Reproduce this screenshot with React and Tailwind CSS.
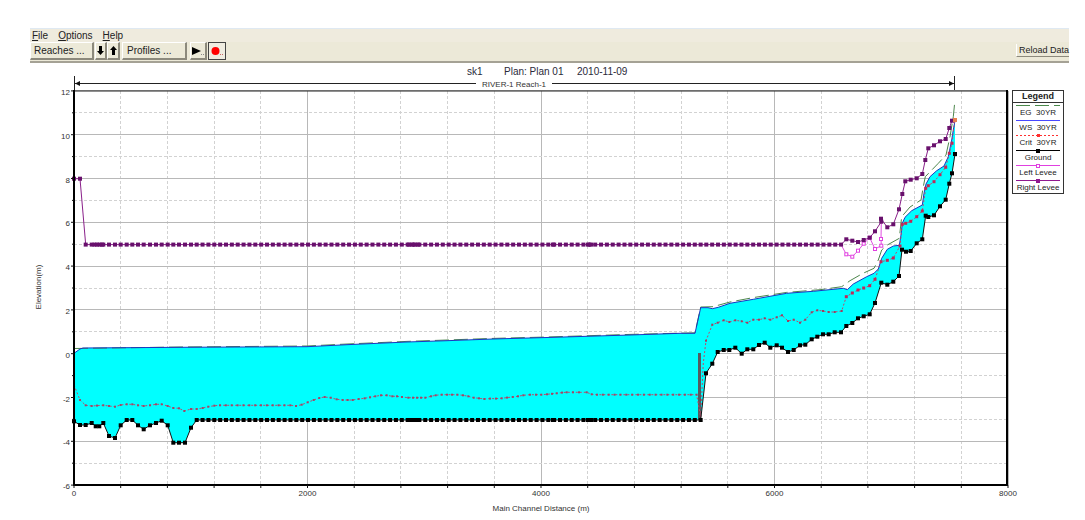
// Evenly spaced cross sections between the upstream bend and the weir
const evenStations = Array.from({ length: 87 }, (_, i) => 196.7 + i * 5.86);
const extraStations = [409, 412, 415, 418, 553, 588, 591];
const flatStations = [...evenStations, ...extraStations].sort((a, b) => a - b);

const ground = [
  [74, 421.3], [80, 425], [85.7, 425], [91.7, 423], [95.7, 426.3], [99.3, 426.3], [103.3, 423],
  [109, 436], [115, 438], [120.7, 425.3], [126.7, 420], [132.3, 420], [138, 425.3], [143.7, 429.3],
  [150, 425.3], [156, 423], [161.7, 420.7], [167.7, 425.3], [173.3, 442.7], [179, 442.7],
  [185, 442.7], [191, 427.7],
  ...flatStations.map((x) => [x, 420]),
  [706, 373.3], [712.3, 363.7], [717.7, 352], [723.7, 350], [729.3, 350], [735.3, 347.7],
  [741.7, 353.7], [747.3, 349.3], [753.3, 349.3], [759, 345], [764.7, 342.7], [770.3, 347.7],
  [776.7, 345.3], [782, 347.7], [788, 352], [793.7, 350], [800, 345.3], [805.3, 344.7],
  [811.7, 339.3], [817.3, 336.7], [823, 334.3], [828.7, 334.3], [834.7, 332.3], [841, 332.3],
  [846.3, 326], [852.3, 323], [858, 318.3], [863.7, 316.3], [869.7, 314.3], [875, 303],
  [881.3, 282.7], [887.3, 284.7], [893.3, 281.7], [899, 276], [902, 249.7], [906, 251.7],
  [910.7, 251], [916.7, 243.3], [922.3, 239.3], [925.7, 215.7], [928.3, 217], [934, 215.3],
  [940, 206.3], [945.7, 199.7], [949.3, 183.7], [952, 173.3], [955, 154],
];

const waterSurface = [
  [74, 353.3], [80, 349], [83, 348], [180, 347.3], [307, 346.7], [347, 344.7], [407, 342],
  [447, 340.7], [493, 339], [547, 337.5], [630, 335], [680, 333.3], [695, 333.3], [700.7, 307.7],
  [708, 307.7], [712.3, 308.7], [718.3, 307.3], [730, 303.3], [753.3, 299.3], [786.7, 293.3],
  [813.3, 291.3], [843.3, 288.3], [847.3, 289.7], [853.3, 284], [866.7, 276.7], [874, 273.3],
  [878.3, 269], [881.7, 258.3], [887.3, 249.3], [893.3, 246], [899.3, 245.3], [901, 235],
  [902.3, 223.3], [905, 217.3], [911.7, 210.7], [922.3, 205], [924, 193.3], [926, 184],
  [930, 176.7], [936.7, 170.7], [944, 166], [948.3, 156.7], [951.7, 140], [953.3, 130],
  [955, 120.7],
];

const energyGrade = [
  [74, 348.5], [180, 347], [307, 346], [347, 344], [407, 341.4], [447, 340], [493, 338.4],
  [547, 337], [630, 334.4], [695, 332.8], [700.7, 307], [713, 306.7], [730, 302], [753.3, 297.6],
  [786.7, 292.4], [820, 289.7], [841.7, 286.7], [850, 280.7], [863, 273.3], [874, 268.3],
  [878.3, 260], [881.7, 250], [887.3, 245], [899.3, 238.3], [901.7, 216.7], [910, 207],
  [921, 200], [923.3, 186.7], [925.3, 176.7], [938.3, 163.3], [946, 155], [950, 136.7],
  [953.3, 116.7], [954.7, 102.7],
];

const critical = [
  [74, 385], [80, 400], [85.7, 405.3], [91.7, 406], [97, 405.6], [103.3, 405.3], [109, 406],
  [115, 406.7], [120.7, 405], [126.7, 404.3], [132.3, 404.3], [138, 405.3], [143.7, 406],
  [150, 405.3], [156, 404.3], [161.7, 404.3], [167.7, 406], [173.3, 408], [179, 408.3],
  [184.3, 411], [191, 409], [196.7, 409], [202.7, 408], [208.3, 406.7], [214.3, 405.7],
  ...Array.from({ length: 13 }, (_, i) => [220 + i * 5.86, 405.3]),
  [296, 406], [301.7, 404.7], [307.7, 402.3], [313.7, 400], [319.3, 398], [324.7, 397],
  [330.7, 397.7], [336.7, 399.3], [342.7, 400], [347.7, 400], [352.7, 400], [358.7, 399],
  [364.7, 398.3], [370, 397.3], [375.3, 396.3], [381, 395.3], [386.7, 395.3], [392.3, 396.3],
  [397, 396.3], [402, 397], [408.3, 397.7], [413, 397.7], [417, 397.7], [421, 397.7],
  [425.3, 397.7], [431, 396.3], [435.7, 395.3], [441.7, 394.7], [447, 394.7], [452, 394.7],
  [457.3, 394.7], [463, 395.3], [468.3, 396.3], [473.7, 397.7], [479, 398.3], [484.3, 399],
  [490, 398.6], [496, 398.6], [501.7, 398.3], [507, 397.6], [512.7, 397], [518, 396.3],
  [523.3, 395.3], [530, 394.7], [536, 394.7], [541.3, 394.7], [547, 394.3], [552, 393.8],
  [556.7, 393.3], [562, 392.6], [566.7, 392.3], [573, 392.3], [579, 392.3], [586.7, 392.3],
  [591.7, 394.3],
  ...Array.from({ length: 18 }, (_, i) => [597 + i * 5.86, 394.7]),
  [700.7, 417], [703.3, 363], [706, 340.7], [712.3, 324.7], [717.7, 322.7], [723.7, 320.3],
  [729.3, 322], [735.3, 320.3], [741.7, 321.3], [747.3, 322.7], [753.3, 319.7], [759, 319.7],
  [764.7, 318.3], [770.3, 319.7], [776.7, 317.3], [782, 315.3], [788, 321], [793.7, 319.7],
  [800, 322.7], [805.3, 319.7], [811.7, 312.3], [817.3, 310.3], [823, 311], [828.7, 312],
  [834.7, 312], [841.7, 311], [846.3, 296.7], [852.3, 293], [858, 290], [863.7, 288],
  [869.7, 285.7], [875, 279.3], [881, 261.7], [887.3, 260.3], [893.3, 258], [900, 246],
  [902.3, 224.3], [905.7, 223.3], [910.7, 221.3], [916.7, 216.7], [922.3, 211], [925.7, 188.3],
  [928.3, 185.7], [934, 181.7], [940, 174.7], [945.7, 167.3], [949.3, 153.3], [952, 143.3],
  [954.7, 120],
];

const rightLevee = [
  [74, 178.7], [80, 178.7],
  ...[85.7, 91.7, 94.5, 97, 99.5, 102, 103.3, 109, 115, 120.7, 126.7, 132.3, 138, 143.7, 150, 156,
    161.7, 167.7, 173.3, 179, 185, 191].map((x) => [x, 244.6]),
  ...flatStations.map((x) => [x, 244.6]),
  ...Array.from({ length: 24 }, (_, i) => [706.3 + i * 5.86, 244.6]),
  [846.3, 239.3], [852.3, 240.7], [858, 242], [863.7, 240], [869.7, 237.7], [875, 231.3],
  [881.3, 221.7], [881, 218.7], [887.3, 227.3], [893.3, 224.3], [899, 209.3], [902.3, 194],
  [905.3, 181.3], [910.7, 179.7], [916.7, 178.3], [922.3, 174], [925.3, 160], [928.3, 148.3],
  [934, 145.3], [940, 141.3], [945.7, 139], [949.3, 128], [952, 120.7],
];

const leftLevee = [
  [841, 244.6], [846.3, 254.3], [852.3, 256.7], [858, 250.7], [863.7, 243.7], [869.7, 237.7],
  [875, 249], [881.3, 245.7], [881, 239], [881.3, 221.7],
];

const toPoints = (pts) => pts.map((p) => p.join(',')).join(' ');
const waterArea = [...waterSurface, ...[...ground].reverse()];

const xPos = (d) => 74 + d * 0.11675;
const yPos = (e) => 90.9 + (12 - e) * 21.9;

const stations = Array.from({ length: 21 }, (_, i) => i * 400);
const elevations = Array.from({ length: 19 }, (_, i) => i - 6);

const legendItems = [
  { label: 'EG  30YR', color: '#4c8a4c', dash: '14 5' },
  { label: 'WS  30YR', color: '#4848ff' },
  { label: 'Crit  30YR', color: '#ff3030', dash: '2 2', marker: 'dot' },
  { label: 'Ground', color: '#000000', marker: 'square' },
  { label: 'Left Levee', color: '#e040e0', marker: 'open' },
  { label: 'Right Levee', color: '#901890', marker: 'square' },
];

function Markers({ points, size, color }) {
  return points.map(([x, y], i) => (
    <rect key={i} x={x - size / 2} y={y - size / 2} width={size} height={size} fill={color} />
  ));
}

function ProfilePlot() {
  return (
    <svg
      viewBox="30 63 980 453"
      className="block h-auto min-w-0 flex-1 overflow-visible font-['Liberation_Sans',Arial,sans-serif] text-[8px]"
      role="img"
      aria-label="Water surface profile"
    >
      {/* Title and reach extent */}
      <g fill="#2a2a3a" fontSize="10">
        <text x="467" y="75">sk1</text>
        <text x="504" y="75">Plan: Plan 01</text>
        <text x="577" y="75">2010-11-09</text>
      </g>
      <g stroke="#222" fill="#111">
        <path d="M74.5 76V91M954.5 76V91M75 83.5H476M552 83.5H954" fill="none" />
        <path d="M75 83.5l5 -2.5v5zM954 83.5l-5 -2.5v5z" stroke="none" />
      </g>
      <text x="514" y="87" textAnchor="middle" fill="#333">RIVER-1 Reach-1</text>

      {/* Grid */}
      <g shapeRendering="crispEdges">
        {stations.map((d) => (
          <line
            key={d}
            x1={xPos(d)} x2={xPos(d)} y1="91" y2="485"
            stroke={d % 2000 === 0 ? '#b8b8b8' : '#d2d2d2'}
            strokeDasharray={d % 2000 === 0 ? undefined : '3 2'}
          />
        ))}
        {elevations.map((e) => (
          <line
            key={e}
            x1="74" x2="1007" y1={yPos(e)} y2={yPos(e)}
            stroke={e % 2 === 0 ? '#b8b8b8' : '#d2d2d2'}
            strokeDasharray={e % 2 === 0 ? undefined : '3 2'}
          />
        ))}
      </g>

      {/* Water body */}
      <polygon points={toPoints(waterArea)} fill="#00ffff" />
      <polyline points={toPoints(energyGrade)} fill="none" stroke="#4c864c" strokeDasharray="14 5" />
      <polyline points={toPoints(waterSurface)} fill="none" stroke="#1838c0" />

      {/* Weir */}
      <rect x="698" y="353" width="3" height="67" fill="#555a60" />

      <polyline points={toPoints(critical)} fill="none" stroke="#c04868" strokeDasharray="2 2" />
      <Markers points={critical.filter(([x]) => x < 698)} size={2} color="#a04868" />
      <Markers points={critical.filter(([x]) => x > 704 && x < 844)} size={2} color="#a03c60" />
      <Markers points={critical.filter(([x]) => x > 844)} size={3} color="#c02858" />

      <polyline points={toPoints(ground)} fill="none" stroke="#111" />
      <Markers points={ground} size={4} color="#000" />

      <polyline points={toPoints(leftLevee)} fill="none" stroke="#e050e0" />
      {leftLevee.slice(1, -1).map(([x, y], i) => (
        <rect key={i} x={x - 1.5} y={y - 1.5} width="3" height="3" fill="#fff" stroke="#e040e0" />
      ))}
      <polyline points={toPoints(rightLevee)} fill="none" stroke="#8a208a" />
      <Markers points={rightLevee} size={4} color="#68106c" />
      <rect x="953" y="118" width="4" height="4" fill="#e88050" />

      {/* Frame */}
      <path d="M74 91H1008" stroke="#222" fill="none" />
      <path d="M74 90V486M1007 90V486" stroke="#000" strokeWidth="2" fill="none" />
      <path d="M73 485H1008" stroke="#000" strokeWidth="2" fill="none" />

      {/* Ticks and labels */}
      {stations.map((d) => (
        <line key={d} x1={xPos(d)} x2={xPos(d)} y1="485" y2="488" stroke="#111" />
      ))}
      {elevations.map((e) => (
        <line key={e} x1={e % 2 === 0 ? 71 : 72} x2="74" y1={yPos(e)} y2={yPos(e)} stroke="#111" />
      ))}
      <g fill="#333">
        {stations.filter((d) => d % 2000 === 0).map((d) => (
          <text key={d} x={xPos(d)} y="496" textAnchor="middle">{d}</text>
        ))}
        {elevations.filter((e) => e % 2 === 0).map((e) => (
          <text key={e} x="70" y={yPos(e) + 4} textAnchor="end">{e}</text>
        ))}
        <text x="541" y="511" textAnchor="middle">Main Channel Distance (m)</text>
        <text transform="translate(41 287) rotate(-90)" textAnchor="middle">Elevation(m)</text>
      </g>
    </svg>
  );
}

function LegendLine({ color, dash, marker }) {
  return (
    <svg
      viewBox="0 0 44 5"
      preserveAspectRatio="none"
      shapeRendering="crispEdges"
      className="block h-[5px] w-full"
      aria-hidden="true"
    >
      <line x1="0" x2="44" y1="2.5" y2="2.5" stroke={color} strokeDasharray={dash} />
      {marker === 'square' && <rect x="20" y="1" width="4" height="4" fill={color} />}
      {marker === 'dot' && <rect x="21" y="1" width="3" height="3" fill={color} />}
      {marker === 'open' && <rect x="20.5" y="1.5" width="3" height="3" fill="#fff" stroke={color} />}
    </svg>
  );
}

function Legend() {
  return (
    <div className="mt-[27px] mr-[5px] ml-[2px] w-[52px] shrink-0 self-start border border-[#333] text-center text-[#222]">
      <h2 className="h-[12px] border-b border-[#333] text-[9px] leading-[11px] font-bold">Legend</h2>
      <ul>
        {legendItems.map((item) => (
          <li key={item.label} className="h-[15px] px-[3px]">
            <LegendLine color={item.color} dash={item.dash} marker={item.marker} />
            <div className="-mx-[3px] text-[8px] leading-[10px] whitespace-pre">{item.label}</div>
          </li>
        ))}
      </ul>
    </div>
  );
}

function ToolButton({ className, children, ...props }) {
  return (
    <button
      type="button"
      className={`flex h-[18px] shrink-0 items-center border-t border-r-2 border-b-2 border-l border-t-white border-r-[#8c897c] border-b-[#8c897c] border-l-white bg-[#ece9d8] whitespace-pre ${className}`}
      {...props}
    >
      {children}
    </button>
  );
}

export default function App() {
  return (
    <div className="bg-white pt-[28px] pr-4 pl-[30px] font-['Liberation_Sans',Arial,sans-serif] text-[10px] text-[#222]">
      <main>
        <nav className="flex h-[14px] items-center gap-[10px] border-t border-[#dfe9f2] bg-[#efebde] pl-[2px] leading-[13px]">
          <button type="button"><u>F</u>ile</button>
          <button type="button"><u>O</u>ptions</button>
          <button type="button"><u>H</u>elp</button>
        </nav>

        <div className="flex h-[21px] items-start border-b-2 border-[#a5a295] bg-[#ece9d8]">
          <ToolButton className="w-[64px] pl-[3px]">Reaches ...</ToolButton>
          <ToolButton className="ml-px w-[12px] justify-center" aria-label="Previous reach">
            <svg viewBox="0 0 7 9" className="h-[9px] w-[7px] shrink-0">
              <path d="M2 0H5V5H7L3.5 9L0 5H2z" fill="#000" />
            </svg>
          </ToolButton>
          <ToolButton className="w-[13px] justify-center" aria-label="Next reach">
            <svg viewBox="0 0 7 9" className="h-[9px] w-[7px] shrink-0">
              <path d="M2 9H5V4H7L3.5 0L0 4H2z" fill="#000" />
            </svg>
          </ToolButton>
          <ToolButton className="ml-[2px] w-[65px] pl-[4px]">Profiles ...</ToolButton>
          <ToolButton className="ml-[3px] w-[17px] justify-center" aria-label="Play">
            <svg viewBox="0 0 14 10" className="h-[10px] w-[14px] shrink-0">
              <path d="M1 1L10 5L1 9z" fill="#000" />
              <path d="M10 8.5h1M12 8.5h1" stroke="#888" />
            </svg>
          </ToolButton>
          <button
            type="button"
            aria-label="Record"
            className="ml-px flex h-[18px] w-[18px] items-center justify-center border border-[#444] bg-[#efece0]"
          >
            <svg viewBox="0 0 14 10" className="h-[10px] w-[14px] shrink-0">
              <circle cx="5.5" cy="5" r="4" fill="#ff0000" />
              <path d="M10 8.5h1M12 8.5h1" stroke="#c66" />
            </svg>
          </button>
          <button
            type="button"
            className="mt-[2px] ml-auto h-[13px] border-b border-l border-b-[#8c897c] border-l-white pl-[2px] text-[9px] leading-[11px] whitespace-nowrap"
          >
            Reload Data
          </button>
        </div>

        <div className="flex">
          <ProfilePlot />
          <Legend />
        </div>
      </main>
    </div>
  );
}
